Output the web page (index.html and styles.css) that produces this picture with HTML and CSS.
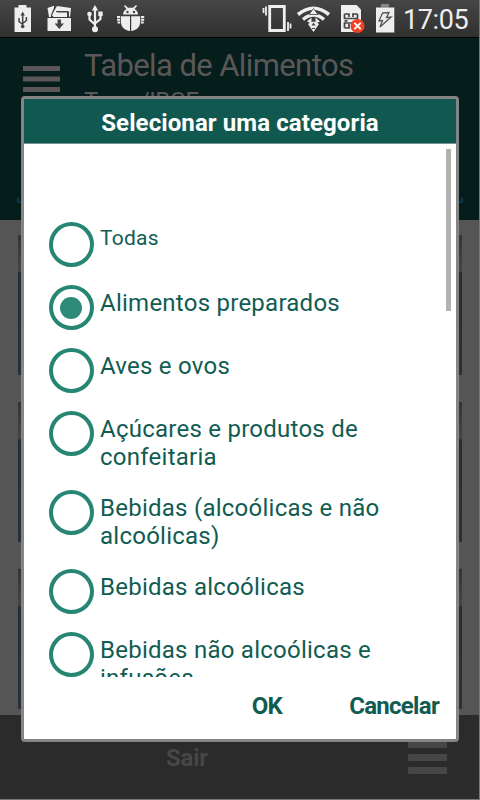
FILE: index.html
```html
<!DOCTYPE html>
<html lang="pt-BR">
<head>
  <meta charset="UTF-8" />
  <meta name="viewport" content="width=device-width, initial-scale=1" />
  <title>Tabela de Alimentos</title>
  <link rel="stylesheet" href="styles.css">
</head>
<body>

  <div class="screen">
    <div class="statusbar">
      <svg class="status-left" width="150" height="37" viewBox="0 0 150 37" fill="#eee">
        <!-- bateria usb -->
        <path d="M18.500 5h8v2.500H31V32H14.500V7.500h4z" />
        <path d="M22.700 14v12M19 18v3.500l3.700 3M26.400 17v3.500l-3.700 3" fill="none" stroke="#444" stroke-width="1.500" />
        <path d="M20.500 15.500l2.200-4 2.200 4z" fill="#444" />
        <circle cx="22.700" cy="26.500" r="1.800" fill="#444" />
        <!-- downloads -->
        <path d="M47.500 8l6.500-2.200v2L51 15v2h-2z" />
        <path d="M53 13l4-7 14 2-1 9-2-1v-4l-10-1-3 5h-3z" />
        <path d="M54 12.500h13V17H53z" />
        <path d="M56 11.500h12.500V17" fill="none" stroke="#444" stroke-width="1" />
        <path d="M47.500 18h23.500v13H47.500z" />
        <path d="M57.500 19.500h3.500v4h3l-4.700 5.500-4.700-5.500h3z" fill="#444" />
        <!-- usb -->
        <path d="M95 9v20M89.500 15v4.500l5.500 5M100.500 14v5l-5.500 4.500" fill="none" stroke="#eee" stroke-width="2.200" />
        <path d="M91.800 10.500l3.200-5.500 3.200 5.500zM98.300 11.500h4.400v4.500h-4.400z" />
        <circle cx="89.500" cy="14" r="2.300" />
        <circle cx="95" cy="29.300" r="3" />
        <!-- depuracao -->
        <path d="M123 14.500c0-2.500 1.500-4.500 3.500-5.500L124 6l1-1 3 2.800h5L136 5l1 1-2.500 3c2 1 3.500 3 3.500 5.500z" />
        <path d="M121 16.200h9V31c-5-.5-9-4-9-9zM131.200 16.200h9V22c0 5-4 8.500-9 9z" />
        <path d="M117 16h3.200v2H117zM117 18.800h3.200v2H117zM117.500 21.600h2.700v2h-2.700zM141 16h3.200v2H141zM141 18.800h3.200v2H141zM141 21.600h2.700v2H141z" />
        <circle cx="127.500" cy="12" r="1.200" fill="#444" />
        <circle cx="134" cy="12" r="1.200" fill="#444" />
      </svg>
      <div class="status-right">
        <svg width="134" height="37" viewBox="262 0 134 37" fill="#eee">
          <!-- vibrar -->
          <path d="M269.700 6.500h14.600v24h-14.600z" fill="none" stroke="#eee" stroke-width="2.800" />
          <path d="M263.500 8v5M266 6.500v9M288 22v9M290.500 23.500v5" fill="none" stroke="#eee" stroke-width="1.800" />
          <!-- wifi -->
          <path d="M298 14.500q15.500-12.500 31 0" fill="none" stroke="#eee" stroke-width="3.600" />
          <path d="M303 19.500q10.500-9 21 0" fill="none" stroke="#eee" stroke-width="3.300" />
          <path d="M308 24q5.500-5 11 0l-5.500 8z" />
          <path d="M313.500 8.500l4.500 6h-9z" stroke="#444" stroke-width=".8" />
          <path d="M307 21.500l4.500-4v6zM320 21.500l-4.500-4v6z" />
          <path d="M313.500 22.500l-2 3h4z" fill="#444" />
          <path d="M312 28.500h3" stroke="#444" stroke-width="1" />
          <!-- chip com erro -->
          <path d="M341 5h15.500l4.500 4.500V32h-20z" />
          <path d="M344.500 14v4.500h13V14M344.500 14h4.500v3M357.500 14H353v3M344.500 28v-5h13v5M344.500 28h4.500v-4M344.500 20.800h3M354.500 20.800h3" fill="none" stroke="#444" stroke-width="1.700" />
          <circle cx="357.500" cy="26" r="7" fill="#f04124" />
          <path d="M354.300 22.800l6.400 6.400M360.700 22.800l-6.400 6.400" stroke="#fff" stroke-width="1.800" />
          <!-- bateria -->
          <path d="M381 4h8v3.500h-8z" fill="#888" />
          <path d="M376 7.500h18.300V32.500H376z" />
          <path d="M382.500 13l6.500-.5-2.500 5 4.500-.5-11 10 2.500-6.500-3.500.5z" fill="none" stroke="#555" stroke-width="1.300" />
        </svg>
        <span class="clock">17:05</span>
      </div>
    </div>

    <div class="header">
      <svg class="menu-icon" width="37" height="26" viewBox="0 0 37 26" fill="#5b5758">
        <rect width="37" height="5" />
        <rect y="10.500" width="37" height="5" />
        <rect y="21" width="37" height="5" />
      </svg>
      <div class="header-text">
        <div class="header-title">Tabela de Alimentos</div>
        <div class="header-sub">Taco /IBGE</div>
      </div>
      <div class="search-line"></div>
    </div>

    <div class="cards">
      <div class="card"></div>
      <div class="card"></div>
      <div class="card"></div>
    </div>

    <div class="footer">
      <span class="exit">Sair</span>
      <svg class="footer-menu" width="39" height="33" viewBox="0 0 39 33" fill="#464646">
        <rect width="39" height="7" rx="1" />
        <rect y="13" width="39" height="7" rx="1" />
        <rect y="26" width="39" height="7" rx="1" />
      </svg>
    </div>

    <div class="dialog">
      <div class="dialog-title">Selecionar uma categoria</div>
      <div class="options">
        <div class="option"><span class="radio"></span><span class="label small">Todas</span></div>
        <div class="option"><span class="radio checked"></span><span class="label">Alimentos preparados</span></div>
        <div class="option"><span class="radio"></span><span class="label">Aves e ovos</span></div>
        <div class="option"><span class="radio"></span><span class="label">Açúcares e produtos de<br>confeitaria</span></div>
        <div class="option"><span class="radio"></span><span class="label">Bebidas (alcoólicas e não<br>alcoólicas)</span></div>
        <div class="option"><span class="radio"></span><span class="label">Bebidas alcoólicas</span></div>
        <div class="option"><span class="radio"></span><span class="label">Bebidas não alcoólicas e<br>infusões</span></div>
        <div class="scrollbar"></div>
      </div>
      <div class="actions">
        <span class="ok">OK</span>
        <span class="cancel">Cancelar</span>
      </div>
    </div>
  </div>

</body>
</html>
```

FILE: styles.css
```css
body {
  margin: 0;
  font-family: Roboto, sans-serif;
  background: #777;
}
.screen {
  position: relative;
  display: flex;
  flex-direction: column;
  width: 479px;
  height: 799px;
  overflow: hidden;
  background: #555;
}
.statusbar {
  display: flex;
  justify-content: space-between;
  height: 37px;
  flex: none;
  background: linear-gradient(#464646, #303030);
  border-bottom: 1px solid #000;
}
.status-right {
  display: flex;
}
.clock {
  width: 83px;
  padding-left: 7px;
  box-sizing: border-box;
  font-size: 27px;
  line-height: 41px;
  letter-spacing: -0.4px;
  color: #eee;
}
.header {
  position: relative;
  display: flex;
  box-sizing: border-box;
  height: 182px;
  flex: none;
  padding-left: 23px;
  background: #051e1b;
}
.menu-icon {
  margin-top: 28px;
}
.header-text {
  margin-left: 24px;
  color: #5b5758;
}
.header-title {
  margin-top: 9px;
  font-size: 31px;
  line-height: 38px;
  letter-spacing: -0.6px;
}
.header-sub {
  padding-top: 1px;
  font-size: 24px;
  line-height: 30px;
  letter-spacing: -0.5px;
}
.search-line {
  position: absolute;
  left: 17px;
  right: 16px;
  bottom: 17px;
  height: 6px;
  border: 2px solid #08344a;
  border-top: 0;
  box-sizing: border-box;
}
.cards {
  display: flex;
  flex-direction: column;
  gap: 27px;
  flex: 1;
  padding: 15px 17px 0 18px;
}
.card {
  height: 140px;
  flex: none;
  background: linear-gradient(#303439, #454647 36px, #252c36 38px, #29313b);
}
.footer {
  display: flex;
  justify-content: space-between;
  box-sizing: border-box;
  height: 84px;
  flex: none;
  padding: 26px 32px 0 166px;
  background: #2b2b2b;
}
.exit {
  font-size: 24px;
  line-height: 35px;
  font-weight: 700;
  letter-spacing: -0.2px;
  color: #464646;
}
.dialog {
  position: absolute;
  left: 21px;
  top: 96px;
  width: 438px;
  height: 646px;
  box-sizing: border-box;
  border: 3px solid #858585;
  border-radius: 4px;
  background: #fff;
}
.dialog-title {
  height: 44px;
  line-height: 48px;
  border-bottom: 1px solid #76948f;
  background: #115850;
  color: #fff;
  font-size: 24px;
  font-weight: 700;
  letter-spacing: 0.1px;
  text-align: center;
}
.options {
  position: relative;
  box-sizing: border-box;
  height: 533px;
  padding: 78px 0 0 25px;
  overflow: hidden;
}
.option {
  display: flex;
  align-items: flex-start;
  margin-bottom: 18px;
}
.radio {
  display: flex;
  align-items: center;
  justify-content: center;
  box-sizing: border-box;
  width: 45px;
  height: 45px;
  flex: none;
  border: 4px solid #268673;
  border-radius: 50%;
}
.checked::after {
  content: "";
  width: 22px;
  height: 22px;
  margin-right: 1px;
  border-radius: 50%;
  background: #2f8b79;
}
.label {
  padding: 4px 0 1px 6px;
  color: #115c52;
  font-size: 24px;
  line-height: 28px;
  letter-spacing: 0.25px;
  white-space: nowrap;
}
.small {
  padding-top: 2px;
  font-size: 21px;
}
.scrollbar {
  position: absolute;
  top: 5px;
  right: 5px;
  width: 5px;
  height: 162px;
  background: #b2b2b2;
}
.actions {
  display: flex;
  justify-content: flex-end;
  gap: 67px;
  padding: 14px 17px 0 0;
  color: #115c52;
  font-size: 24px;
  line-height: 30px;
  font-weight: 700;
  letter-spacing: -0.7px;
}
```
